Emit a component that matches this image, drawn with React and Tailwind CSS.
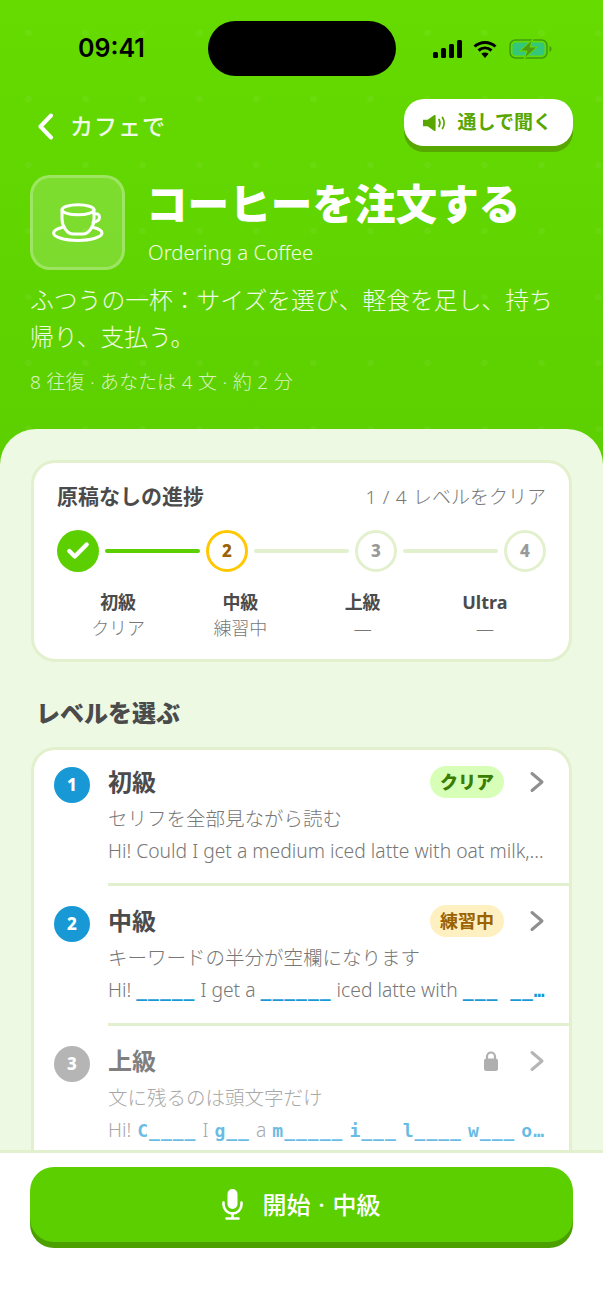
import { Check } from 'lucide-react'

const StatusIcons = () => (
  <div className="flex items-center gap-[11px]">
    <svg width="29" height="18" viewBox="0 0 29 18" fill="#000">
      <rect x="0" y="12" width="5" height="6" rx="1.5" />
      <rect x="8" y="8" width="5" height="10" rx="1.5" />
      <rect x="16" y="4" width="5" height="14" rx="1.5" />
      <rect x="24" y="0" width="5" height="18" rx="1.5" />
    </svg>
    <svg width="24" height="18" viewBox="0 0 24 18" fill="none" stroke="#000" strokeWidth="3">
      <path d="M1.5 6.5C7.5 1 16.5 1 22.5 6.5" />
      <path d="M5.5 10.5C9.5 7 14.5 7 18.5 10.5" />
      <path d="M12 18l-3.6-4.2c2-1.6 5.2-1.6 7.2 0z" fill="#000" stroke="none" />
    </svg>
    <svg width="43" height="20" viewBox="0 0 43 20" fill="none" className="ml-[1px]">
      <rect x="1" y="1" width="37" height="18" rx="5.5" stroke="#3f9a12" strokeWidth="1.5" />
      <rect x="3.5" y="3.5" width="32" height="13" rx="3" fill="#34c77b" />
      <path d="M40.5 7v6c1.2-.4 2-1.6 2-3s-.8-2.6-2-3z" fill="#3f9a12" />
      <path d="M24 0L11 12h7l-3 8 13-12h-7z" fill="#4f9a10" stroke="#66dd00" strokeWidth="1" />
    </svg>
  </div>
)

const CupIcon = () => (
  <svg width="52" height="40" viewBox="0 0 52 40" fill="none" stroke="#fff" strokeWidth="3" strokeLinecap="round" strokeLinejoin="round">
    <path d="M10 24.5C4.8 25.8 1.6 27.8 1.6 30c0 4 10.8 7.4 24.2 7.4S50 34 50 30c0-2.2-3.2-4.2-8.4-5.5" />
    <ellipse cx="26" cy="6.800" rx="16" ry="5" />
    <path d="M10 6.800v9c0 8 5.500 15.200 11 15.200h10c5.500 0 11-7.200 11-15.200v-9" />
    <path d="M42 11c2.800-1 5.500.4 5.500 3 0 2.800-2.800 4.800-6.500 5.500" />
  </svg>
)

const SpeakerIcon = () => (
  <svg width="24" height="20" viewBox="0 0 24 20" fill="none">
    <path d="M1 6.800h4.600L12 2.200c.8-.6 1.600-.2 1.600.8v14c0 1-.8 1.400-1.600.8l-6.400-4.600H1z" fill="#58a700" />
    <path d="M17 6.500c1.200 2.200 1.200 4.800 0 7" stroke="#58a700" strokeWidth="1.700" strokeLinecap="round" />
    <path d="M20.500 4.500c2 3.400 2 7.600 0 11" stroke="#58a700" strokeWidth="1.700" strokeLinecap="round" />
  </svg>
)

const MicIcon = () => (
  <svg width="21" height="31" viewBox="0 0 21 31" fill="none" stroke="#fff" strokeWidth="2.600" strokeLinecap="round">
    <rect x="5.500" y="0" width="10" height="20" rx="5" fill="#fff" stroke="none" />
    <path d="M1.500 13.500v2c0 5 4 9 9 9s9-4 9-9v-2" />
    <path d="M10.500 24.500v4.500M4.500 29.500h12" />
  </svg>
)

const Chevron = ({ stroke = '#8f8f8f' }) => (
  <svg width="16" height="22" viewBox="0 0 16 22" fill="none" stroke={stroke} strokeWidth="3" strokeLinecap="round" strokeLinejoin="round">
    <path d="M3 2.500L13 11 3 19.500" />
  </svg>
)

const LockIcon = () => (
  <svg width="16" height="22" viewBox="0 0 16 22" fill="none" className="mr-[5px]">
    <path d="M4 10V6.500a4 4 0 0 1 8 0V10" stroke="#afafaf" strokeWidth="2.200" />
    <rect x="1" y="8.500" width="14" height="12.500" rx="2.500" fill="#afafaf" />
  </svg>
)

const steps = [
  { label: '初級', sub: 'クリア' },
  { label: '中級', sub: '練習中' },
  { label: '上級', sub: '—' },
  { label: 'Ultra', sub: '—' },
]

const Blank = ({ children }) => (
  <span className="font-['DejaVu_Sans_Mono',monospace] font-bold text-[18px] tracking-[1px] text-[#1899d6]">{children}</span>
)

const LevelRow = ({ num, title, sub, badge, preview, locked, last, first }) => (
  <div className={`flex pl-5 ${first ? 'pt-4' : 'pt-[19px]'}`}>
    <div className={`w-9 h-9 shrink-0 rounded-full flex items-center justify-center text-white text-[17px] font-extrabold mt-[1px] ${locked ? 'bg-[#b5b5b5]' : 'bg-[#1899d6]'}`}>
      {num}
    </div>
    <div className={`flex-1 min-w-0 ml-[18px] pr-6 ${last ? '' : 'pb-[19px] border-b-[3px] border-[#e3f0cd]'}`}>
      <div className="flex items-center h-8">
        <span className={`text-[24px] font-bold leading-8 ${locked ? 'text-[#7f7f7f]' : 'text-[#4b4b4b]'}`}>{title}</span>
        <div className="ml-auto flex items-center gap-[25px]">
          {badge}
          <Chevron stroke={locked ? '#b5b5b5' : '#8f8f8f'} />
        </div>
      </div>
      <div className={`mt-[7px] text-[19.5px] leading-7 font-light ${locked ? 'text-[#a8a8a8]' : 'text-[#777]'}`}>{sub}</div>
      <div className={`mt-[5px] text-[19.3px] leading-[26px] font-light whitespace-nowrap overflow-hidden ${locked ? 'text-[#a8a8a8] [&>span]:opacity-65 [word-spacing:1px]' : 'text-[#777]'}`}>{preview}</div>
    </div>
  </div>
)

export default function App() {
  return (
    <div className="h-[1311px] w-full overflow-hidden flex flex-col bg-white font-['Noto_Sans','Noto_Sans_CJK_JP',sans-serif]">
      {/* Green header */}
      <div className="bg-[radial-gradient(circle,rgba(255,255,255,0.05)_3px,transparent_3.5px),linear-gradient(180deg,#65db00,#5ccf00)] bg-[length:57px_66px,100%_100%] pb-[69px] shrink-0">
        <div className="flex items-center h-[55px] mt-[21px] pl-[78px]">
          <div className="w-[130px] text-[25px] font-semibold text-black font-['Inter',sans-serif]">09:41</div>
          <div className="w-[188px] h-[55px] rounded-[28px] bg-black" />
          <div className="ml-[37px]"><StatusIcons /></div>
        </div>

        <div className="flex items-center justify-between mt-[23px] pl-[38px] pr-[30px]">
          <div className="flex items-center gap-[17px] pt-[7px] text-white">
            <svg width="15" height="27" viewBox="0 0 15 27" fill="none" stroke="#fff" strokeWidth="4" strokeLinecap="round" strokeLinejoin="round">
              <path d="M13 2.500L2.500 13.500 13 24.500" />
            </svg>
            <span className="text-[23px] font-medium tracking-[1px] opacity-90">カフェで</span>
          </div>
          <div className="flex items-center gap-3 h-[47px] pl-[18px] pr-[21px] bg-white rounded-[20px] shadow-[0_6px_0_#58a700]">
            <SpeakerIcon />
            <span className="text-[19px] font-bold text-[#58a700]">通しで聞く</span>
          </div>
        </div>

        <div className="flex mt-[29px] px-[30px]">
          <div className="w-[95px] h-[95px] shrink-0 rounded-[20px] bg-white/[0.18] border-[3px] border-white/25 flex items-center justify-center">
            <CupIcon />
          </div>
          <div className="ml-[21px] min-w-0">
            <div className="text-[41.6px] leading-[58px] font-black text-white whitespace-nowrap">コーヒーを注文する</div>
            <div className="mt-[5px] pl-[2px] text-[20.4px] leading-7 font-light text-white/90">Ordering a Coffee</div>
          </div>
        </div>

        <p className="mt-[12px] px-[30px] text-[23.8px] leading-[37px] font-light text-white/90">ふつうの一杯：サイズを選び、軽食を足し、持ち帰り、支払う。</p>
        <p className="mt-[12px] px-[30px] text-[19px] leading-7 font-light text-white/75 [word-spacing:0.6px]">8 往復 · あなたは 4 文 · 約 2 分</p>
      </div>

      {/* Sheet */}
      <div className="relative -mt-[36px] flex-1 min-h-0 overflow-hidden bg-[#edf9e3] rounded-t-[36px] px-[31px] pt-[31px]">
        <div className="bg-white border-[3px] border-[#e3f0cd] rounded-[24px] px-[23px] pt-[20px] pb-[18px]">
          <div className="flex items-center justify-between h-7">
            <span className="text-[21px] font-bold text-[#4b4b4b]">原稿なしの進捗</span>
            <span className="text-[19px] font-light text-[#777] [word-spacing:1.5px]">1 / 4 レベルをクリア</span>
          </div>
          <div className="flex items-center mt-[19px]">
            <div className="w-[42px] h-[42px] rounded-full bg-[#5ccf00] flex items-center justify-center shrink-0">
              <Check size={26} color="#fff" strokeWidth={4} />
            </div>
            <div className="flex-1 h-1 mx-[6px] rounded-full bg-[#5ccf00]" />
            <div className="w-[42px] h-[42px] rounded-full border-[3px] border-[#ffc800] flex items-center justify-center shrink-0 text-[17px] font-extrabold text-[#9a6200]">2</div>
            <div className="flex-1 h-1 mx-[6px] rounded-full bg-[#e3f0cd]" />
            <div className="w-[42px] h-[42px] rounded-full border-[3px] border-[#e3f0cd] flex items-center justify-center shrink-0 text-[17px] font-extrabold text-[#999]">3</div>
            <div className="flex-1 h-1 mx-[6px] rounded-full bg-[#e3f0cd]" />
            <div className="w-[42px] h-[42px] rounded-full border-[3px] border-[#e3f0cd] flex items-center justify-center shrink-0 text-[17px] font-extrabold text-[#999]">4</div>
          </div>
          <div className="grid grid-cols-4 mt-[17px]">
            {steps.map((s) => (
              <div key={s.label} className="text-center">
                <div className="text-[18px] leading-[26px] font-bold text-[#4b4b4b]">{s.label}</div>
                <div className="text-[18px] leading-[26px] font-light text-[#777]">{s.sub}</div>
              </div>
            ))}
          </div>
        </div>

        <div className="mt-[34px] ml-[5px] text-[24px] leading-[34px] font-black text-[#4b4b4b]">レベルを選ぶ</div>

        <div className="mt-[17px] bg-white border-[3px] border-b-0 border-[#e3f0cd] rounded-t-[24px] h-[600px]">
          <LevelRow
            first
            num={1}
            title="初級"
            sub="セリフを全部見ながら読む"
            badge={<span className="h-8 px-[10px] rounded-full bg-[#d7ffb8] text-[#3a7d00] text-[18px] font-black leading-8">クリア</span>}
            preview="Hi! Could I get a medium iced latte with oat milk,…"
          />
          <LevelRow
            num={2}
            title="中級"
            sub="キーワードの半分が空欄になります"
            badge={<span className="h-8 px-[10px] rounded-full bg-[#fff0c2] text-[#9a6200] text-[18px] font-bold leading-8">練習中</span>}
            preview={<>Hi! <Blank>_____</Blank> I get a <Blank>______</Blank> iced latte with <Blank>___ __…</Blank></>}
          />
          <LevelRow
            locked
            last
            num={3}
            title="上級"
            sub="文に残るのは頭文字だけ"
            badge={<LockIcon />}
            preview={<>Hi! <Blank>C____</Blank> I <Blank>g__</Blank> a <Blank>m_____</Blank> <Blank>i___</Blank> <Blank>l____</Blank> <Blank>w___</Blank> <Blank>o…</Blank></>}
          />
        </div>
      </div>

      {/* Footer CTA */}
      <div className="h-[161px] shrink-0 bg-white border-t-[3px] border-[#e3f0cd] px-[30px] pt-[14px]">
        <div className="h-[75px] rounded-[24px] bg-[#5ccf00] shadow-[0_6px_0_#4ba000] flex items-center justify-center gap-[19px]">
          <MicIcon />
          <span className="text-[24px] font-medium text-white [word-spacing:1.5px]">開始 · 中級</span>
        </div>
      </div>
    </div>
  )
}
